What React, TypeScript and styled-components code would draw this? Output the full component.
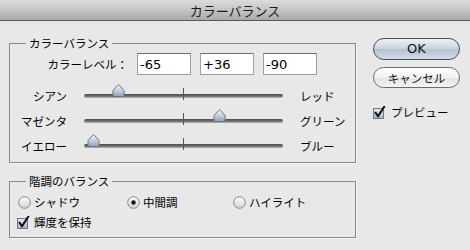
import React from 'react';
import styled, { createGlobalStyle } from 'styled-components';

const GlobalStyle = createGlobalStyle`
	html, body {
		margin: 0;
		padding: 0;
		background: #e8e8e8;
	}
	body {
		font-family: "DejaVu Sans", "Noto Sans CJK JP", sans-serif;
		color: #000;
	}
`;

const jp = `"Noto Sans CJK JP", "DejaVu Sans", sans-serif`;

interface SliderProps {
	left: string;
	right: string;
	value: number;
}

const Slider: React.FC<SliderProps> = ({ left, right, value }) => {
	const pct = (value + 100) / 200;
	return (
		<SliderRow>
			<SideLabel align='right'>{left}</SideLabel>
			<Track>
				<Tick />
				<Thumb style={{ left: pct * 199 - 6.5 }} width='13' height='13' viewBox='0 0 13 13'>
					<defs>
						<linearGradient id='thumbFill' x1='0' y1='0' x2='0' y2='1'>
							<stop offset='0' stopColor='#eef2f6' />
							<stop offset='0.5' stopColor='#c3ceda' />
							<stop offset='1' stopColor='#93a4b8' />
						</linearGradient>
					</defs>
					<path
						d='M1 12.5 V6.5 L5.3 1.6 Q6.5 0.4 7.7 1.6 L12 6.5 V12.5 Z'
						fill='url(#thumbFill)'
						stroke='#6b7686'
						strokeWidth='1'
					/>
				</Thumb>
			</Track>
			<SideLabel align='left'>{right}</SideLabel>
		</SliderRow>
	);
};

const CheckIcon = () => (
	<svg width='13' height='13' viewBox='0 0 13 13'>
		<defs>
			<linearGradient id='boxFill' x1='0' y1='0' x2='0' y2='1'>
				<stop offset='0' stopColor='#e4e9ef' />
				<stop offset='1' stopColor='#a7b5c6' />
			</linearGradient>
		</defs>
		<rect x='0.5' y='2.5' width='10' height='10' fill='url(#boxFill)' stroke='#6e7888' />
		<path d='M2.6 6.8 L5 10.2 L11.2 0.8' fill='none' stroke='#111' strokeWidth='2' strokeLinecap='square' />
	</svg>
);

const RadioIcon: React.FC<{ on?: boolean }> = ({ on }) => (
	<svg width='13' height='13' viewBox='0 0 13 13'>
		<defs>
			<linearGradient id='radioFill' x1='0' y1='0' x2='0' y2='1'>
				<stop offset='0' stopColor='#ffffff' />
				<stop offset='1' stopColor='#d2d2d2' />
			</linearGradient>
		</defs>
		<circle cx='6.5' cy='6.5' r='5.8' fill='url(#radioFill)' stroke='#858585' strokeWidth='1' />
		{on && <circle cx='6.5' cy='6.5' r='2.2' fill='#111' />}
	</svg>
);

const App: React.FC = () => {
	return (
		<Window>
			<GlobalStyle />
			<TitleBar>カラーバランス</TitleBar>
			<Body>
				<Main>
					<Group>
						<Legend>カラーバランス</Legend>
						<LevelRow>
							<LevelLabel>カラーレベル：</LevelLabel>
							<NumInput readOnly value='-65' />
							<NumInput readOnly value='+36' />
							<NumInput readOnly value='-90' />
						</LevelRow>
						<Sliders>
							<Slider left='シアン' right='レッド' value={-65} />
							<Slider left='マゼンタ' right='グリーン' value={36} />
							<Slider left='イエロー' right='ブルー' value={-90} />
						</Sliders>
					</Group>
					<Group second>
						<Legend>階調のバランス</Legend>
						<RadioRow>
							<Option>
								<RadioIcon />
								<span>シャドウ</span>
							</Option>
							<Option>
								<RadioIcon on />
								<span>中間調</span>
							</Option>
							<Option>
								<RadioIcon />
								<span>ハイライト</span>
							</Option>
						</RadioRow>
						<CheckRow>
							<CheckIcon />
							<span>輝度を保持</span>
						</CheckRow>
					</Group>
				</Main>
				<Side>
					<PillButton primary>OK</PillButton>
					<PillButton>キャンセル</PillButton>
					<PreviewRow>
						<CheckIcon />
						<span>プレビュー</span>
					</PreviewRow>
				</Side>
			</Body>
		</Window>
	);
};

export default App;

const Window = styled.div`
	width: 470px;
	height: 250px;
	background: #e8e8e8;
	overflow: hidden;
`;

const TitleBar = styled.div`
	height: 20px;
	border-bottom: 1px solid #5a5a5a;
	background: linear-gradient(#dcdcdc, #c4c4c4 50%, #a9a9a9);
	font-family: ${jp};
	font-size: 13px;
	line-height: 21px;
	text-align: center;
	color: #1a1a1a;
`;

const Body = styled.div`
	display: flex;
	gap: 17px;
	padding-left: 9px;
`;

const Main = styled.div`
	width: 347px;
	display: flex;
	flex-direction: column;
`;

const Group = styled.fieldset<{ second?: boolean }>`
	margin: ${({ second }) => (second ? '10px 0 0' : '14px 0 0')};
	padding: 0;
	border: 1px solid #8a8a8a;
	box-shadow: 1px 1px 0 #f7f7f7;
	min-width: 0;
	padding-bottom: ${({ second }) => (second ? '5px' : '4px')};
`;

const Legend = styled.legend`
	margin-left: 16px;
	padding: 0 3px;
	font-family: ${jp};
	font-size: 11.5px;
	line-height: 16px;
`;

const LevelRow = styled.div`
	display: flex;
	align-items: center;
	gap: 9px;
	margin-top: 2px;
	height: 22px;
`;

const LevelLabel = styled.div`
	width: 118px;
	text-align: right;
	font-family: ${jp};
	font-size: 11.5px;
	line-height: 16px;
`;

const NumInput = styled.input`
	box-sizing: border-box;
	width: 54px;
	height: 22px;
	margin: 0;
	padding: 0 0 0 2px;
	border: 1px solid #a0a0a0;
	border-top-color: #6e6e6e;
	background: #fff;
	font-family: "DejaVu Sans", sans-serif;
	font-size: 13px;
	color: #000;
	outline: none;
`;

const Sliders = styled.div`
	margin-top: 8px;
	display: flex;
	flex-direction: column;
`;

const SliderRow = styled.div`
	display: grid;
	grid-template-columns: 57px 199px auto;
	column-gap: 17px;
	align-items: center;
	height: 25px;
`;

const SideLabel = styled.div<{ align: 'left' | 'right' }>`
	text-align: ${({ align }) => align};
	font-family: ${jp};
	font-size: 11.5px;
	line-height: 16px;
`;

const Track = styled.div`
	position: relative;
	height: 4px;
	border-radius: 2px;
	background: linear-gradient(#4c4c4c, #6a6a6a 50%, #b8b8b8);
`;

const Tick = styled.div`
	position: absolute;
	left: 99px;
	top: -6px;
	width: 1px;
	height: 12px;
	background: #555;
`;

const Thumb = styled.svg`
	position: absolute;
	top: -10px;
	display: block;
`;

const RadioRow = styled.div`
	display: grid;
	grid-template-columns: 109px 106px auto;
	align-items: center;
	height: 20px;
	margin-top: 3px;
	padding-left: 8px;
`;

const Option = styled.div`
	display: flex;
	align-items: center;
	gap: 3px;
	font-family: ${jp};
	font-size: 11.5px;
	line-height: 16px;

	svg {
		display: block;
	}
`;

const CheckRow = styled.div`
	display: flex;
	align-items: center;
	gap: 4px;
	height: 20px;
	padding-left: 7px;
	font-family: ${jp};
	font-size: 11.5px;
	line-height: 16px;

	svg {
		display: block;
	}
`;

const Side = styled.div`
	width: 87px;
	padding-top: 17px;
	display: flex;
	flex-direction: column;
`;

const PillButton = styled.div<{ primary?: boolean }>`
	box-sizing: border-box;
	height: ${({ primary }) => (primary ? '22px' : '21px')};
	margin-bottom: 7px;
	border-radius: 11px;
	border: 1px solid ${({ primary }) => (primary ? '#4a4f57' : '#6a6a6a')};
	background: ${({ primary }) =>
		primary
			? 'linear-gradient(#eef2f6, #c9d3de 50%, #b3c0cf 51%, #d3dce6)'
			: 'linear-gradient(#ffffff, #f1f1f1 50%, #e2e2e2 51%, #f4f4f4)'};
	display: flex;
	align-items: center;
	justify-content: center;
	font-family: ${({ primary }) => (primary ? '"DejaVu Sans", sans-serif' : jp)};
	font-size: ${({ primary }) => (primary ? '13px' : '11.5px')};
	line-height: 16px;
	color: #111;
`;

const PreviewRow = styled.div`
	display: flex;
	align-items: center;
	gap: 5px;
	margin-top: 9px;
	height: 16px;
	font-family: ${jp};
	font-size: 11.5px;
	line-height: 16px;

	svg {
		display: block;
	}
`;
